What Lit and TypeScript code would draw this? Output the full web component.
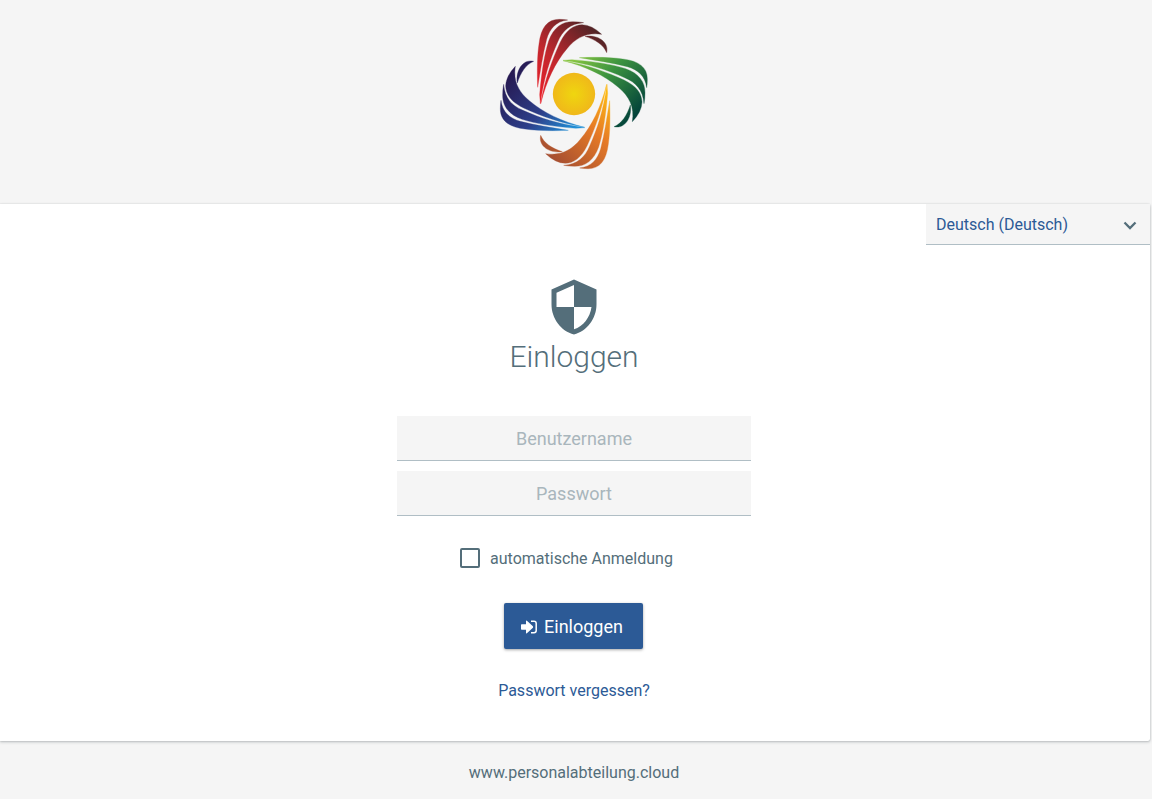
import { LitElement, html, svg, css } from "lit";
import { customElement } from "lit/decorators.js";

const PETALS = [
  { id: "red", angle: 0, shift: 0, stops: ["#e6202a", "#c1272d", "#4f2426"] },
  { id: "green", angle: 90, shift: -4, stops: ["#86c440", "#3d9440", "#00403a"] },
  { id: "orange", angle: 180, shift: -2, stops: ["#fdb813", "#e67a26", "#a54e31"] },
  { id: "blue", angle: 270, shift: 3, stops: ["#1f8fd6", "#2d3f8a", "#261850"] },
];

@customElement("brand-logo")
export class BrandLogo extends LitElement {
  static styles = css`
    :host {
      display: block;
    }
    .logo {
      display: block;
      width: 170px;
      height: 170px;
    }
  `;

  render() {
    return html`
      <svg class="logo" viewBox="0 0 510 510" role="img" aria-label="Logo">
        <defs>
          <radialGradient id="sun">
            <stop offset="0" stop-color="#efd60f"></stop>
            <stop offset="1" stop-color="#f0b81a"></stop>
          </radialGradient>
          ${PETALS.map(
            (p) => svg`
              <linearGradient id=${p.id} gradientUnits="userSpaceOnUse" x1="150" y1="250" x2="330" y2="70">
                <stop offset="0" stop-color=${p.stops[0]}></stop>
                <stop offset="0.4" stop-color=${p.stops[1]}></stop>
                <stop offset="1" stop-color=${p.stops[2]}></stop>
              </linearGradient>`
          )}
        </defs>
        ${PETALS.map(
          (p) => svg`
            <g
              fill=${`url(#${p.id})`}
              stroke=${`url(#${p.id})`}
              stroke-width="1"
              transform=${`translate(${p.shift} 0) rotate(${p.angle} 252 252)`}
            >
              <path d="M143 232C141 180 142 135 147 102C153 53 172 28 208 28Q222 28 233 30C198 34 179 56 170 88C158 134 151 185 143 232Z"></path>
              <path d="M149 254C154 190 163 133 176 93C191 52 216 35 248 35Q266 35 281 38C240 41 217 62 203 96C180 148 162 200 151 281Z"></path>
              <path d="M152 281C165 205 188 146 210 98C229 59 251 45 276 44Q306 45 335 73C292 66 258 82 231 116C196 157 169 213 152 281Z"></path>
              <path d="M285 79C320 73 358 94 350 128C340 104 316 89 285 79Z"></path>
            </g>`
        )}
        <circle cx="252" cy="252" r="63.500" fill="url(#sun)"></circle>
      </svg>
    `;
  }
}

@customElement("app-root")
export class AppRoot extends LitElement {
  static styles = css`
    :host {
      display: flex;
      flex-direction: column;
      min-height: 100vh;
      background: #f5f5f5;
      color: #546e7a;
      font: 16px/24px Roboto, sans-serif;
    }
    * {
      box-sizing: border-box;
    }
    .header {
      display: flex;
      justify-content: center;
      padding: 10px 2px 24px 0;
    }
    .card {
      display: flex;
      flex-direction: column;
      margin-right: 2px;
      padding-bottom: 38px;
      background: #fff;
      border-radius: 0 2px 2px 0;
      box-shadow: 0 1px 3px rgba(38, 50, 56, 0.3), 0 0 1px rgba(38, 50, 56, 0.3);
    }
    .language {
      position: relative;
      align-self: flex-end;
      width: 224px;
    }
    .language select {
      display: block;
      width: 100%;
      height: 41px;
      padding: 2px 36px 0 10px;
      appearance: none;
      border: 0;
      border-bottom: 1px solid #b0bec5;
      border-radius: 0;
      background: #f5f5f5;
      color: #2c5a96;
      font: inherit;
    }
    .chevron {
      position: absolute;
      right: 13px;
      top: 17px;
      width: 14px;
      height: 9px;
      pointer-events: none;
    }
    .login {
      display: flex;
      flex-direction: column;
      align-items: center;
      padding: 32px 2px 0 0;
    }
    .shield {
      display: block;
      width: 60px;
      height: 60px;
    }
    h1 {
      margin: 0 0 39px;
      font-size: 30px;
      line-height: 40px;
      font-weight: 300;
    }
    .fields {
      display: grid;
      gap: 10px;
      width: 354px;
      max-width: 100%;
    }
    .field {
      width: 100%;
      height: 45px;
      padding: 0 12px;
      border: 0;
      border-bottom: 1px solid #b0bec5;
      border-radius: 0;
      background: #f5f5f5;
      color: #546e7a;
      font: 18px/24px Roboto, sans-serif;
      text-align: center;
    }
    .field::placeholder {
      color: #a9b6bc;
      opacity: 1;
    }
    .remember {
      display: flex;
      align-items: center;
      gap: 10px;
      margin: 29px 15px 32px 0;
    }
    .remember span {
      padding-top: 2px;
    }
    .remember input {
      width: 20px;
      height: 20px;
      margin: 0;
      appearance: none;
      border: 2px solid #546e7a;
      border-radius: 2px;
    }
    .remember input:checked {
      background: #546e7a;
      box-shadow: inset 0 0 0 3px #fff;
    }
    .submit {
      display: flex;
      align-items: center;
      gap: 7px;
      height: 46px;
      padding: 2px 20px 0 17px;
      margin-right: 1px;
      border: 0;
      border-radius: 2px;
      background: #2c5a96;
      box-shadow: 0 1px 3px rgba(0, 0, 0, 0.35);
      color: #fff;
      font: 18px/24px Roboto, sans-serif;
      cursor: pointer;
    }
    .arrow {
      width: 16px;
      height: 14px;
    }
    a {
      color: #2c5a96;
      text-decoration: none;
    }
    .forgot {
      margin-top: 30px;
    }
    .footer {
      padding: 20px 4px 12px 0;
      text-align: center;
    }
    .footer a {
      color: #546e7a;
    }
  `;

  private submit(event: Event) {
    event.preventDefault();
  }

  render() {
    return html`
      <header class="header"><brand-logo></brand-logo></header>
      <main class="card">
        <div class="language">
          <select aria-label="Sprache">
            <option>Deutsch (Deutsch)</option>
          </select>
          <svg class="chevron" viewBox="0 0 14 9" aria-hidden="true">
            <path d="M1.500 1.500L7 7L12.500 1.500" fill="none" stroke="#546e7a" stroke-width="2.300"></path>
          </svg>
        </div>
        <form class="login" @submit=${this.submit}>
          <svg class="shield" viewBox="0 0 24 24" aria-hidden="true">
            <path
              fill="#546e7a"
              d="M12 1L3 5v6c0 5.550 3.840 10.740 9 12 5.160-1.260 9-6.450 9-12V5l-9-4zm0 10.990h7c-.53 4.120-3.280 7.790-7 8.940V12H5V6.300l7-3.110v8.800z"
            ></path>
          </svg>
          <h1>Einloggen</h1>
          <div class="fields">
            <input class="field" type="text" name="username" placeholder="Benutzername" aria-label="Benutzername" />
            <input class="field" type="password" name="password" placeholder="Passwort" aria-label="Passwort" />
          </div>
          <label class="remember">
            <input type="checkbox" name="remember" />
            <span>automatische Anmeldung</span>
          </label>
          <button class="submit" type="submit">
            <svg class="arrow" viewBox="0 0 16 14" aria-hidden="true">
              <path fill="#fff" d="M0 5q0-.7.7-.7H5V1.200q0-1 .9-.4l6 5.500q.5.700 0 1.400l-6 5.500q-.9.600-.9-.4V9.700H.7Q0 9.700 0 9Z"></path>
              <path fill="none" stroke="#fff" stroke-width="1.500" d="M10 1.200h3q2.200 0 2.200 2.200v7.200q0 2.200-2.200 2.200h-3"></path>
            </svg>
            Einloggen
          </button>
          <a class="forgot" href="#">Passwort vergessen?</a>
        </form>
      </main>
      <footer class="footer"><a href="#">www.personalabteilung.cloud</a></footer>
    `;
  }
}
